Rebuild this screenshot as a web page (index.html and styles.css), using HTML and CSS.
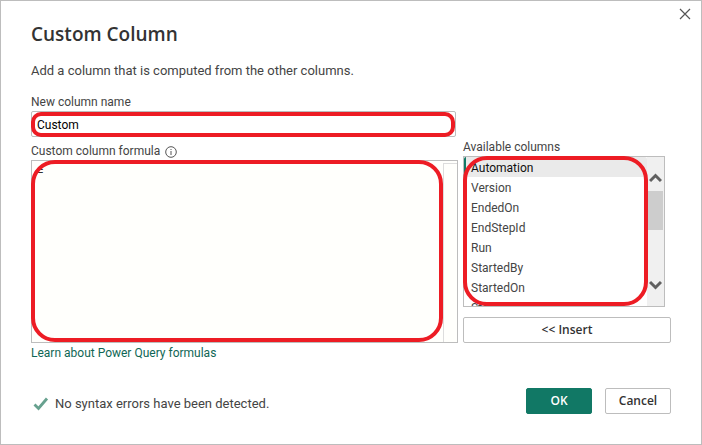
FILE: index.html
```
<!DOCTYPE html>
<html lang="en">
<head>
    <meta charset="UTF-8">
    <meta name="viewport" content="width=device-width, initial-scale=1.0">
    <title>Custom Column</title>
    <link rel="stylesheet" href="styles.css">
</head>
<body>
    <form class="dialog">
        <button type="button" class="close" aria-label="Close">
            <svg width="12" height="12" viewBox="0 0 12 12"><path d="M1 1l10 10M11 1L1 11" fill="none" stroke="#555" stroke-width="1.2"/></svg>
        </button>

        <h1>Custom Column</h1>
        <p class="intro">Add a column that is computed from the other columns.</p>

        <div class="editor">
            <div class="left">
                <label for="columnName">New column name</label>
                <div class="name-box">
                    <input type="text" id="columnName" value="Custom">
                    <div class="mark mark-name"></div>
                </div>
                <label for="formula">Custom column formula
                    <svg class="info" width="12" height="12" viewBox="0 0 12 12">
                        <circle cx="6" cy="6" r="5.3" fill="none" stroke="#555" stroke-width="1"/>
                        <path d="M6 5v4M6 3v1" stroke="#555" stroke-width="1"/>
                    </svg>
                </label>
                <div class="formula-box">
                    <textarea id="formula" spellcheck="false">=</textarea>
                    <div class="gutter"></div>
                    <div class="mark mark-large mark-formula"></div>
                </div>
            </div>

            <div class="right">
                <label for="columns">Available columns</label>
                <div class="list-box">
                    <select id="columns" size="8">
                        <option selected>Automation</option>
                        <option>Version</option>
                        <option>EndedOn</option>
                        <option>EndStepId</option>
                        <option>Run</option>
                        <option>StartedBy</option>
                        <option>StartedOn</option>
                        <option>Status</option>
                    </select>
                    <div class="scrollbar">
                        <svg width="13" height="10" viewBox="0 0 13 10"><path d="M1 8l5.500-5.500L12 8" fill="none" stroke="#606060" stroke-width="3"/></svg>
                        <div class="thumb"></div>
                        <svg width="13" height="10" viewBox="0 0 13 10"><path d="M1 2l5.500 5.500L12 2" fill="none" stroke="#606060" stroke-width="3"/></svg>
                    </div>
                    <div class="mark mark-large mark-list"></div>
                </div>
                <button type="button" class="btn">&lt;&lt; Insert</button>
            </div>
        </div>

        <a href="#" class="learn">Learn about Power Query formulas</a>

        <div class="footer">
            <div class="status">
                <svg width="16" height="14" viewBox="0 0 16 14"><path d="M1.500 7.500L5.500 11.500L14 1.500" fill="none" stroke="#67a18f" stroke-width="2.800"/></svg>
                <span>No syntax errors have been detected.</span>
            </div>
            <button type="submit" class="btn btn-primary">OK</button>
            <button type="button" class="btn">Cancel</button>
        </div>
    </form>
</body>
</html>
```
FILE: styles.css
```
* {
    box-sizing: border-box;
}
body {
    margin: 0;
    background-color: #fff;
    font-family: Roboto, "Open Sans", sans-serif;
    font-size: 12px;
    line-height: 16px;
    color: #444;
}
.dialog {
    position: relative;
    min-height: 100vh;
    padding: 20px 30px 30px;
    border: 1px solid #bdbdbd;
}
input, textarea, select, button {
    font: inherit;
}
h1 {
    margin: 0 0 14px;
    font-family: "Open Sans", sans-serif;
    font-size: 19px;
    line-height: 26px;
    font-weight: 600;
    color: #333;
}
.intro {
    margin: 0 0 13px;
    font-size: 13px;
    line-height: 20px;
}
.close {
    position: absolute;
    top: 7px;
    right: 10px;
    padding: 0;
    border: none;
    background: none;
    line-height: 0;
}
.editor {
    display: grid;
    grid-template-columns: 1fr 208px;
    gap: 5px;
    align-items: end;
}
label {
    display: block;
    margin-bottom: 1px;
}
.info {
    margin-left: 2px;
    vertical-align: -3px;
}
.name-box {
    position: relative;
    height: 26px;
    margin: 0 2px 6px 0;
}
.name-box input {
    width: 100%;
    height: 100%;
    padding: 2px 5px 0;
    border: 1px solid #bdbdbd;
    border-radius: 2px;
    color: #000;
}
.formula-box {
    position: relative;
    display: flex;
    height: 183px;
    border: 1px solid #bdbdbd;
    background-color: #fffffc;
}
.formula-box textarea {
    flex: 1;
    padding: 3px 5px;
    border: none;
    background: none;
    resize: none;
    overflow: hidden;
    color: #333;
}
.gutter {
    width: 14px;
    margin-top: 2px;
    border-top: 1px solid #ddd;
    border-left: 1px solid #ddd;
}
.list-box {
    position: relative;
    display: flex;
    height: 151px;
    margin: 0 6px 10px 0;
    border: 1px solid #bdbdbd;
}
.list-box select {
    flex: 1;
    height: 100%;
    padding: 0;
    border: none;
    outline: none;
    overflow: hidden;
    color: #444;
}
.list-box option {
    height: 20px;
    padding: 4px 7px 0;
}
.list-box option:checked {
    background: linear-gradient(to right, #117865 2px, #eaeaea 2px);
}
.scrollbar {
    display: flex;
    flex-direction: column;
    align-items: center;
    width: 17px;
    padding: 16px 0;
    background-color: #f0f0f0;
}
.thumb {
    width: 15px;
    height: 39px;
    margin: 8px 0 auto;
    background-color: #cdcdcd;
}
.mark {
    position: absolute;
    border: 4px solid #ed1c24;
    pointer-events: none;
}
.mark-name {
    inset: 1px 1px 0 0;
    border-radius: 10px;
}
.mark-large {
    border-radius: 24px;
}
.mark-formula {
    inset: -1px 14px 0 -1px;
}
.mark-list {
    inset: -1px 16px 0 -1px;
}
.btn {
    height: 26px;
    padding: 0;
    border: 1px solid #bdbdbd;
    border-radius: 2px;
    background-color: #fff;
    font-family: "Open Sans", sans-serif;
    font-weight: 600;
    color: #333;
}
.right .btn {
    display: block;
    width: 100%;
}
.btn-primary {
    border-color: #117865;
    background-color: #117865;
    color: #fff;
}
.learn {
    display: block;
    margin-top: 2px;
    color: #0f6655;
    text-decoration: none;
}
.footer {
    display: flex;
    gap: 13px;
    align-items: center;
    margin-top: 27px;
}
.footer .btn {
    width: 66px;
}
.status {
    display: flex;
    flex: 1;
    gap: 6px;
    align-items: center;
    padding: 6px 0 0 2px;
    font-size: 13px;
}
```
